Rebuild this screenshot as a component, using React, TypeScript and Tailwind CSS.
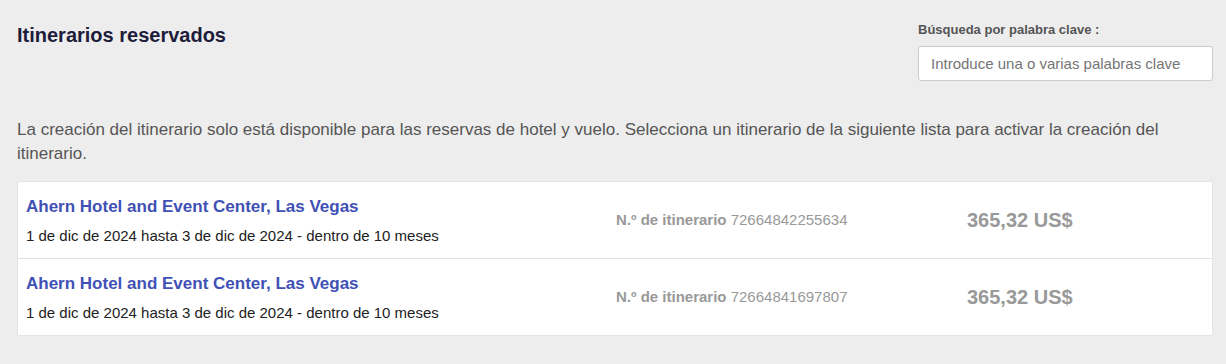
import { useState } from "react";

type Itinerary = {
  hotel: string;
  dates: string;
  number: string;
  price: string;
};

const itineraries: Itinerary[] = [
  {
    hotel: "Ahern Hotel and Event Center, Las Vegas",
    dates: "1 de dic de 2024 hasta 3 de dic de 2024 - dentro de 10 meses",
    number: "72664842255634",
    price: "365,32 US$",
  },
  {
    hotel: "Ahern Hotel and Event Center, Las Vegas",
    dates: "1 de dic de 2024 hasta 3 de dic de 2024 - dentro de 10 meses",
    number: "72664841697807",
    price: "365,32 US$",
  },
];

export default function App() {
  const [query, setQuery] = useState("");

  return (
    <div className="min-h-screen bg-[#ededed] pl-[17px] pr-[13px] pt-[22px] font-['Liberation_Sans',Arial,sans-serif]">
      {/* Header */}
      <div className="flex items-start justify-between">
        <h1 className="mt-[1px] text-[20px] leading-6 font-bold text-[#1d1d3b]">Itinerarios reservados</h1>
        <div className="flex w-[295px] flex-col">
          <label className="mb-2 text-[13px] leading-4 font-bold text-[#555]">Búsqueda por palabra clave :</label>
          <input
            value={query}
            onChange={(e) => setQuery(e.target.value)}
            placeholder="Introduce una o varias palabras clave"
            className="h-[35px] w-full rounded-[3px] border border-[#cbcbcb] bg-white px-3 text-[15px] text-[#333] placeholder:text-[#757575] focus:outline-none"
          />
        </div>
      </div>

      <p className="mt-[37px] text-[17px] leading-6 text-[#555]">
        La creación del itinerario solo está disponible para las reservas de hotel y vuelo. Selecciona un itinerario de la
        siguiente lista para activar la creación del itinerario.
      </p>

      {/* List */}
      <div className="mt-[15px] rounded-[2px] border border-[#e4e4e4] bg-white">
        {itineraries.map((it, i) => (
          <div
            key={it.number}
            className={`grid grid-cols-[590px_351px_1fr] items-center px-2 ${i > 0 ? "border-t border-[#e2e2e2]" : ""}`}
          >
            <div className="pt-[14px] pb-[12px]">
              <a href="#" className="block text-[17px] leading-[22px] font-bold text-[#3f51b5]">
                {it.hotel}
              </a>
              <div className="mt-2 text-[15px] leading-5 text-[#222]">{it.dates}</div>
            </div>
            <div className="text-[15px] text-[#999]">
              <span className="font-bold">N.º de itinerario</span> {it.number}
            </div>
            <div className="text-[20px] font-bold text-[#999]">{it.price}</div>
          </div>
        ))}
      </div>
    </div>
  );
}
